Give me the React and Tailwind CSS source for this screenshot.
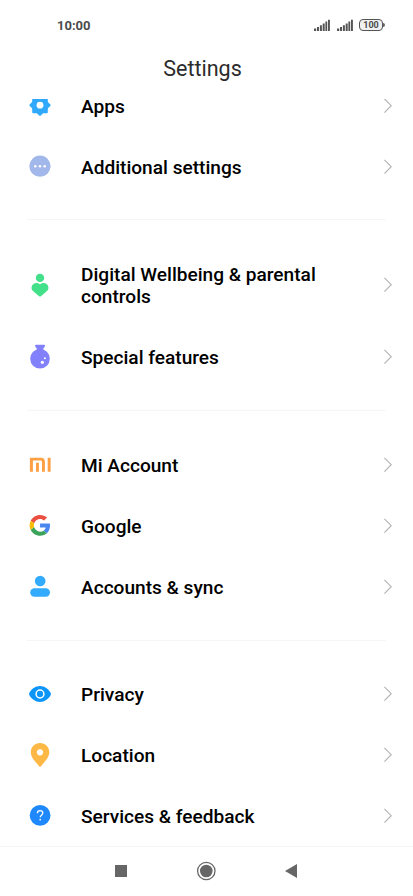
const Icon = ({ children }) => (
  <svg className="w-6 h-6 shrink-0 overflow-visible" viewBox="0 0 24 24" fill="none">
    {children}
  </svg>
);

const AppsIcon = () => (
  <Icon>
    <g fill="#30a9fd">
      <rect x="4.2" y="3.6" width="15.6" height="15.6" rx="1" />
      <rect x="4.2" y="3.4" width="15.6" height="15.6" rx="1.2" transform="rotate(45 12 11.2)" />
    </g>
    <circle cx="12" cy="11.2" r="3.4" fill="#fff" />
  </Icon>
);

const MoreIcon = () => (
  <Icon>
    <circle cx="12" cy="11.2" r="10.6" fill="#a3b8ea" />
    <g fill="#fff">
      <circle cx="7.3" cy="11.2" r="1.3" />
      <circle cx="12" cy="11.2" r="1.3" />
      <circle cx="16.7" cy="11.2" r="1.3" />
    </g>
  </Icon>
);

const WellbeingIcon = () => (
  <Icon>
    <g fill="#41e089">
      <circle cx="12" cy="4.9" r="4.2" />
      <path d="M12 11.4c1.6-1.8 4.6-2 6.6-.5 2.3 1.9 2.5 4.9.7 6.9l-6.4 5.4c-.6.5-1.2.5-1.8 0l-6.4-5.4c-1.8-2-1.6-5 .7-6.9 2-1.5 5-1.3 6.6.5z" />
    </g>
  </Icon>
);

const FlaskIcon = () => (
  <Icon>
    <g fill="#8280fa">
      <path d="M7.9-.2h8.3c.6 0 .8.4.8.9 0 1.1-.8 1.8-1.6 2.3v3H8.7V3c-.9-.5-1.6-1.2-1.6-2.3 0-.5.3-.9.8-.9z" />
      <circle cx="12" cy="13.8" r="9.8" />
    </g>
    <g fill="#fff">
      <circle cx="14.4" cy="17.3" r="1.6" />
      <circle cx="16.9" cy="13.3" r="1" />
    </g>
  </Icon>
);

const MiIcon = () => (
  <Icon>
    <g fill="#fd9f43">
      <path d="M1.9 4.8h11c2.6 0 4 1.5 4 4v10H14V9.3c0-1.3-.6-1.900-1.800-1.900H4.900v11.400h-3z" />
      <path d="M8 9.8h2.900v9H8zM19.700 4.800h2.900v14h-2.900z" />
    </g>
  </Icon>
);

const GoogleIcon = () => (
  <Icon>
    <g transform="translate(1.6 .9) scale(.435)">
      <path fill="#ea4f41" d="M24 9.500c3.540 0 6.710 1.220 9.210 3.600l6.850-6.850C35.900 2.380 30.470 0 24 0 14.620 0 6.510 5.380 2.560 13.220l7.980 6.190C12.430 13.720 17.740 9.500 24 9.500z" />
      <path fill="#4a86ee" d="M46.980 24.550c0-1.570-.15-3.090-.38-4.550H24v9.020h12.940c-.58 2.960-2.260 5.480-4.780 7.180l7.730 6c4.510-4.180 7.090-10.360 7.090-17.650z" />
      <path fill="#fbbc05" d="M10.530 28.590c-.48-1.450-.76-2.990-.76-4.590s.27-3.140.76-4.590l-7.980-6.190C.92 16.460 0 20.120 0 24c0 3.880.92 7.540 2.560 10.780l7.970-6.190z" />
      <path fill="#3ba45a" d="M24 48c6.480 0 11.930-2.130 15.890-5.810l-7.730-6c-2.150 1.450-4.920 2.300-8.160 2.300-6.260 0-11.570-4.220-13.470-9.910l-7.980 6.190C6.510 42.620 14.620 48 24 48z" />
    </g>
  </Icon>
);

const PersonIcon = () => (
  <Icon>
    <g fill="#32aafd">
      <circle cx="12.2" cy="6" r="5.3" />
      <rect x="2.2" y="13.3" width="19.8" height="8.4" rx="4.2" />
    </g>
  </Icon>
);

const EyeIcon = () => (
  <Icon>
    <path fill="#0b95fb" d="M1.4 10.7C3.7 6.800 7.500 4 12 4s8.300 2.800 10.600 6.700c.5.900.5 1.700 0 2.600C20.300 17.200 16.500 20 12 20s-8.300-2.800-10.600-6.700c-.5-.9-.5-1.700 0-2.600z" />
    <circle cx="12" cy="12" r="3.9" stroke="#fff" strokeWidth="1.5" />
  </Icon>
);

const PinIcon = () => (
  <Icon>
    <path fill="#fdb845" d="M12-.1c5.200 0 9.300 4 9.300 9.200 0 5.400-4.400 9.400-8.300 14.100-.6.800-1.300.8-1.900 0C7.200 18.500 2.800 14.500 2.800 9.100 2.800 3.900 6.900-.1 12-.1z" />
    <circle cx="12" cy="9.3" r="3.1" fill="#fff" />
  </Icon>
);

const HelpIcon = () => (
  <Icon>
    <circle cx="12.1" cy="11.4" r="10.4" fill="#1e88fc" />
    <path d="M9.400 9.300c0-1.600 1.100-2.600 2.700-2.600s2.700 1 2.700 2.400c0 2-2.600 2.100-2.600 4.200" stroke="#fff" strokeWidth="1.3" />
    <circle cx="12.2" cy="15.6" r=".85" fill="#fff" />
  </Icon>
);

const groups = [
  {
    divider: '',
    rows: [
      { label: 'Apps', icon: AppsIcon },
      { label: 'Additional settings', icon: MoreIcon },
    ],
  },
  {
    divider: 'mt-[21px] mb-6',
    rows: [
      { label: 'Digital Wellbeing & parental controls', icon: WellbeingIcon, tall: true },
      { label: 'Special features', icon: FlaskIcon },
    ],
  },
  {
    divider: 'mt-[22px] mb-6',
    rows: [
      { label: 'Mi Account', icon: MiIcon },
      { label: 'Google', icon: GoogleIcon },
      { label: 'Accounts & sync', icon: PersonIcon },
    ],
  },
  {
    divider: 'mt-[22px] mb-[23px]',
    rows: [
      { label: 'Privacy', icon: EyeIcon },
      { label: 'Location', icon: PinIcon },
      { label: 'Services & feedback', icon: HelpIcon },
    ],
  },
];

const Row = ({ label, icon: RowIcon, tall }) => (
  <div className={`flex items-center pl-7 pr-[21px] pb-px ${tall ? 'h-[83px]' : 'h-[61px]'}`}>
    <RowIcon />
    <span
      className={`ml-[29px] w-[260px] text-[19.1px] leading-[22px] font-medium text-black ${tall ? 'pt-0.5' : 'pt-px'}`}
    >
      {label}
    </span>
    <svg className="ml-auto w-2 h-4 shrink-0" viewBox="0 0 8 16" fill="none">
      <path d="M.4 .8 7.2 7.7 .4 14.6" stroke="#b4b4b4" strokeWidth="1.2" />
    </svg>
  </div>
);

const Signal = () => (
  <svg className="w-4 h-3" viewBox="0 0 16 12" fill="#555">
    <path d="M0 9.500h2.200V12H0zM3 8h2v4H3zM5.900 6.200h2V12h-2zM8.700 4.400h2V12h-2zM11.400 2.400h1.800V12h-1.800zM14 .8h1.900V12H14z" />
  </svg>
);

const StatusBar = () => (
  <div className="flex h-[49px] shrink-0 items-center pl-[57px] pr-7 text-[#4b4b4b]">
    <span className="pt-0.5 text-[13px] leading-4 font-bold">10:00</span>
    <div className="ml-auto flex items-center gap-[7px]">
      <Signal />
      <Signal />
      <div className="-ml-px flex items-center">
        <div className="flex h-3 w-6 items-center justify-center rounded-[4px] border-[1.5px] border-[#555] bg-[#f1f1f1] pt-px text-[9px] leading-none font-bold">
          100
        </div>
        <div className="h-1 w-0.5 rounded-r-sm bg-[#666]" />
      </div>
    </div>
  </div>
);

const NavBar = () => (
  <div className="flex h-[50px] shrink-0 items-center justify-between border-t border-[#f5f5f5] bg-white pl-[115px] pr-[116px] pb-px">
    <div className="h-3 w-3 bg-[#666]" />
    <svg className="w-5 h-5" viewBox="0 0 20 20" fill="none">
      <circle cx="10.3" cy="10" r="8.7" stroke="#666" strokeWidth="1.3" />
      <circle cx="10.3" cy="10" r="6.3" fill="#666" />
    </svg>
    <svg className="w-3 h-3.5" viewBox="0 0 12 14" fill="#666">
      <path d="M0 7 12 0v14z" />
    </svg>
  </div>
);

export default function App() {
  return (
    <div className="flex h-[896px] w-[413px] flex-col overflow-hidden bg-white font-['Roboto',sans-serif]">
      <StatusBar />
      <h1 className="h-[50px] shrink-0 pt-2 pr-2 text-center text-[21.5px] leading-6 text-[#2b2b2b]">Settings</h1>
      <main className="min-h-0 flex-1 overflow-hidden">
        <div className="-mt-[23px]">
          {groups.map(({ divider, rows }) => (
            <section key={rows[0].label}>
              {divider && <div className={`mx-[27px] h-px bg-[#f6f6f6] ${divider}`} />}
              {rows.map((row) => (
                <Row key={row.label} {...row} />
              ))}
            </section>
          ))}
        </div>
      </main>
      <NavBar />
    </div>
  );
}
